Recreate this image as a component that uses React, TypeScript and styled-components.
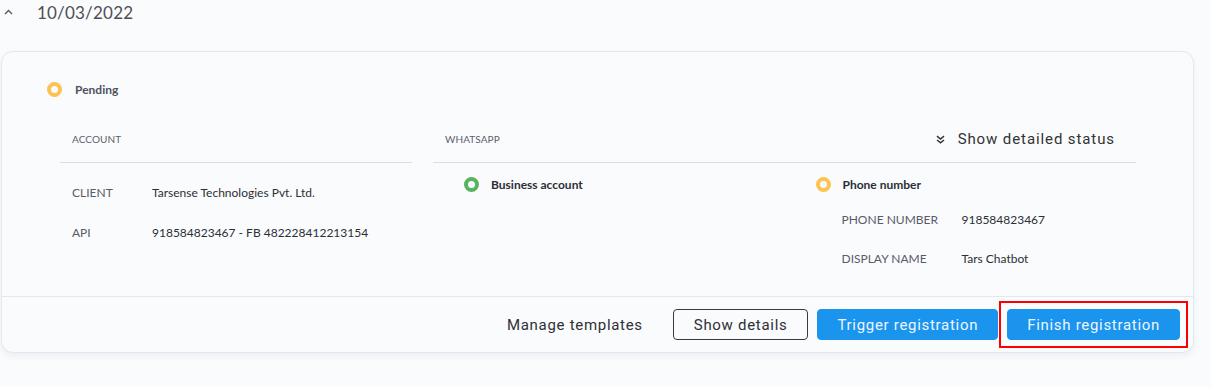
import React from "react";
import styled, { createGlobalStyle } from "styled-components";

const Global = createGlobalStyle`
  html, body { margin: 0; padding: 0; background: #fafbfd; }
  body { font-family: "Lato", "Noto Sans", sans-serif; color: #333; }
  * { box-sizing: border-box; }
`;

const Page = styled.div`
  width: 1211px;
  height: 387px;
  overflow: hidden;
  background: #fafbfd;
`;

const Header = styled.div`
  display: flex;
  align-items: center;
  height: 24px;
  padding-left: 4px;
`;

const Chevron = styled.span`
  display: inline-flex;
  width: 10px;
  margin-right: 23px;
  color: #555;
`;

const DateText = styled.span`
  font-size: 17px;
  color: #4e4f55;
  letter-spacing: 0.2px;
`;

const Card = styled.div`
  margin: 27px 17px 0 1px;
  border: 1px solid #e4e7ed;
  border-radius: 12px;
  background: #fafbfd;
  box-shadow: 0 3px 6px rgba(20, 30, 60, 0.06);
`;

const Body = styled.div`
  padding: 28px 0 28px 0;
  border-bottom: 1px solid #e3e8ef;
`;

const StatusLine = styled.div<{ $pl?: number }>`
  display: flex;
  align-items: center;
  gap: 11px;
  height: 18px;
  padding-left: ${(p) => p.$pl ?? 0}px;
  font-size: 12px;
  font-weight: 700;
  color: ${(p) => (p.$pl ? "#4e525d" : "#2c2f36")};
`;

const Dot = styled.span<{ $c: string }>`
  width: 15px;
  height: 15px;
  border-radius: 50%;
  border: 4px solid ${(p) => p.$c};
  flex: none;
`;

const Columns = styled.div`
  display: grid;
  grid-template-columns: 352px 703px;
  gap: 21px;
  margin: 16px 0 0 58px;
`;

const SectionHead = styled.div`
  height: 49px;
  display: flex;
  align-items: center;
  justify-content: space-between;
  padding: 2px 21px 0 12px;
  border-bottom: 1px solid #d8dde6;
  font-size: 10px;
  color: #5a5f6b;
  letter-spacing: 0.1px;
`;

const Toggle = styled.span`
  display: inline-flex;
  align-items: center;
  gap: 13px;
  font-family: "Roboto", sans-serif;
  font-size: 15px;
  letter-spacing: 0.9px;
  color: #333;
`;

const Rows = styled.div`
  padding: 21px 0 0 12px;
  display: flex;
  flex-direction: column;
  gap: 22px;
`;

const KV = styled.div<{ $w: number }>`
  display: grid;
  grid-template-columns: ${(p) => p.$w}px 1fr;
  font-size: 12px;
  line-height: 18px;
`;

const Key = styled.span`
  color: #575c68;
`;

const Val = styled.span`
  color: #2c2f36;
`;

const Split = styled.div`
  display: grid;
  grid-template-columns: 1fr 1fr;
`;

const SubCol = styled.div`
  padding: 12px 0 0 31px;
`;

const SubRows = styled.div`
  padding: 18px 0 0 26px;
  display: flex;
  flex-direction: column;
  gap: 21px;
`;

const Footer = styled.div`
  display: flex;
  justify-content: flex-end;
  align-items: center;
  gap: 9px;
  padding: 12px 13px 12px 0;
`;

const Btn = styled.button<{ $v: "text" | "outline" | "primary" }>`
  height: 31px;
  padding: 0 ${(p) => (p.$v === "primary" ? 19 : 20)}px;
  border-radius: 4px;
  font-family: "Roboto", sans-serif;
  font-size: 15px;
  letter-spacing: 0.7px;
  cursor: pointer;
  border: 1px solid
    ${(p) => (p.$v === "outline" ? "#3a3a3a" : p.$v === "primary" ? "#1a94ec" : "transparent")};
  background: ${(p) => (p.$v === "primary" ? "#1a94ec" : "transparent")};
  color: ${(p) => (p.$v === "primary" ? "#eef6ff" : "#2f3035")};
`;

const Highlight = styled.span`
  display: inline-flex;
  outline: 2px solid #ff0000;
  outline-offset: 6px;
`;

export default function App() {
  return (
    <Page>
      <Global />
      <Header>
        <Chevron>
          <svg width="9" height="6" viewBox="0 0 9 6">
            <path d="M1 5 L4.5 1.5 L8 5" fill="none" stroke="#555" strokeWidth="1.3" />
          </svg>
        </Chevron>
        <DateText>10/03/2022</DateText>
      </Header>
      <Card>
        <Body>
          <StatusLine $pl={45}>
            <Dot $c="#fbc34f" />
            <span style={{ marginLeft: 2 }}>Pending</span>
          </StatusLine>
          <Columns>
            <div>
              <SectionHead>ACCOUNT</SectionHead>
              <Rows>
                <KV $w={80}>
                  <Key>CLIENT</Key>
                  <Val>Tarsense Technologies Pvt. Ltd.</Val>
                </KV>
                <KV $w={80}>
                  <Key>API</Key>
                  <Val>918584823467 - FB 482228412213154</Val>
                </KV>
              </Rows>
            </div>
            <div>
              <SectionHead>
                <span>WHATSAPP</span>
                <Toggle>
                  <svg width="9" height="9" viewBox="0 0 9 9">
                    <path
                      d="M1 1.2 L4.5 4 L8 1.2 M1 5 L4.5 7.8 L8 5"
                      fill="none"
                      stroke="#333"
                      strokeWidth="1.5"
                    />
                  </svg>
                  Show detailed status
                </Toggle>
              </SectionHead>
              <Split>
                <SubCol>
                  <StatusLine>
                    <Dot $c="#58b25e" />
                    <span style={{ marginLeft: 1 }}>Business account</span>
                  </StatusLine>
                </SubCol>
                <SubCol>
                  <StatusLine>
                    <Dot $c="#fbc34f" />
                    <span style={{ marginLeft: 1 }}>Phone number</span>
                  </StatusLine>
                  <SubRows>
                    <KV $w={120}>
                      <Key>PHONE NUMBER</Key>
                      <Val>918584823467</Val>
                    </KV>
                    <KV $w={120}>
                      <Key>DISPLAY NAME</Key>
                      <Val>Tars Chatbot</Val>
                    </KV>
                  </SubRows>
                </SubCol>
              </Split>
            </div>
          </Columns>
        </Body>
        <Footer>
          <Btn $v="text">Manage templates</Btn>
          <Btn $v="outline">Show details</Btn>
          <Btn $v="primary">Trigger registration</Btn>
          <Highlight>
            <Btn $v="primary">Finish registration</Btn>
          </Highlight>
        </Footer>
      </Card>
    </Page>
  );
}
